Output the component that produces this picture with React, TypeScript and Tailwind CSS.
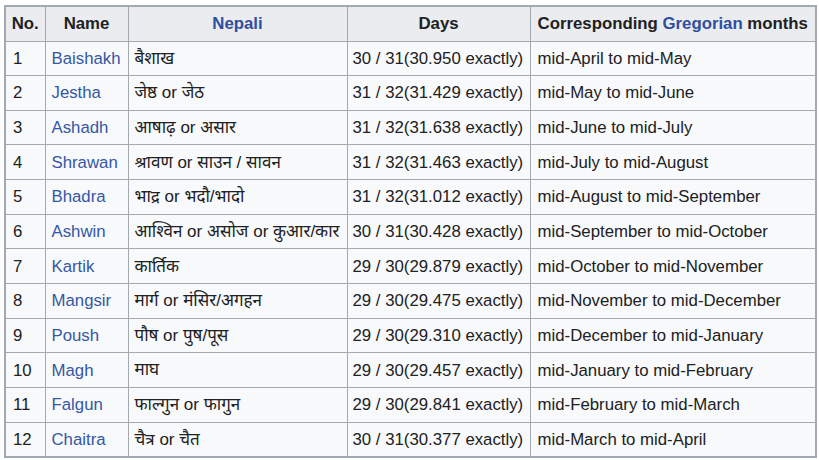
import React from "react";

const rows: [string, string, string, string, string][] = [
  ["1", "Baishakh", "बैशाख", "30 / 31(30.950 exactly)", "mid-April to mid-May"],
  ["2", "Jestha", "जेष्ठ or जेठ", "31 / 32(31.429 exactly)", "mid-May to mid-June"],
  ["3", "Ashadh", "आषाढ़ or असार", "31 / 32(31.638 exactly)", "mid-June to mid-July"],
  ["4", "Shrawan", "श्रावण or साउन / सावन", "31 / 32(31.463 exactly)", "mid-July to mid-August"],
  ["5", "Bhadra", "भाद्र or भदौ/भादो", "31 / 32(31.012 exactly)", "mid-August to mid-September"],
  ["6", "Ashwin", "आश्विन or असोज or कुआर/कार", "30 / 31(30.428 exactly)", "mid-September to mid-October"],
  ["7", "Kartik", "कार्तिक", "29 / 30(29.879 exactly)", "mid-October to mid-November"],
  ["8", "Mangsir", "मार्ग or मंसिर/अगहन", "29 / 30(29.475 exactly)", "mid-November to mid-December"],
  ["9", "Poush", "पौष or पुष/पूस", "29 / 30(29.310 exactly)", "mid-December to mid-January"],
  ["10", "Magh", "माघ", "29 / 30(29.457 exactly)", "mid-January to mid-February"],
  ["11", "Falgun", "फाल्गुन or फागुन", "29 / 30(29.841 exactly)", "mid-February to mid-March"],
  ["12", "Chaitra", "चैत्र or चैत", "30 / 31(30.377 exactly)", "mid-March to mid-April"],
];

export default function App() {
  return (
    <div className="w-[819px] h-[460px] bg-white pl-[4px] pt-[5px] overflow-hidden">
      <table
        className="table-fixed border-collapse w-[811px] text-[16.8px] text-[#202122] bg-[#f8f9fa] border-2 border-[#a2a9b1]"
        style={{ fontFamily: '"Liberation Sans", Arial, "Noto Sans", sans-serif' }}
      >
        <colgroup>
          <col className="w-[40px]" />
          <col className="w-[83px]" />
          <col className="w-[219px]" />
          <col className="w-[183px]" />
          <col className="w-[286px]" />
        </colgroup>
        <thead>
          <tr className="h-[35px] bg-[#eaecf0]">
            <th className="border border-[#a2a9b1] px-[5px] font-bold text-center">No.</th>
            <th className="border border-[#a2a9b1] px-[5px] font-bold text-center">Name</th>
            <th className="border border-[#a2a9b1] px-[5px] font-bold text-center text-[#2f4f9f]">Nepali</th>
            <th className="border border-[#a2a9b1] px-[5px] font-bold text-center">Days</th>
            <th className="border border-[#a2a9b1] px-[5px] font-bold text-center whitespace-nowrap">
              Corresponding <span className="text-[#2f4f9f]">Gregorian</span> months
            </th>
          </tr>
        </thead>
        <tbody>
          {rows.map((r) => (
            <tr key={r[0]} className="h-[34.67px]">
              <td className="border border-[#a2a9b1] px-[7px] whitespace-nowrap">{r[0]}</td>
              <td className="border border-[#a2a9b1] px-[6px] whitespace-nowrap text-[#3557a5]">{r[1]}</td>
              <td className="border border-[#a2a9b1] px-[6px] whitespace-nowrap text-[17px]">{r[2]}</td>
              <td className="border border-[#a2a9b1] px-[5px] whitespace-nowrap">{r[3]}</td>
              <td className="border border-[#a2a9b1] px-[7px] whitespace-nowrap">{r[4]}</td>
            </tr>
          ))}
        </tbody>
      </table>
    </div>
  );
}
